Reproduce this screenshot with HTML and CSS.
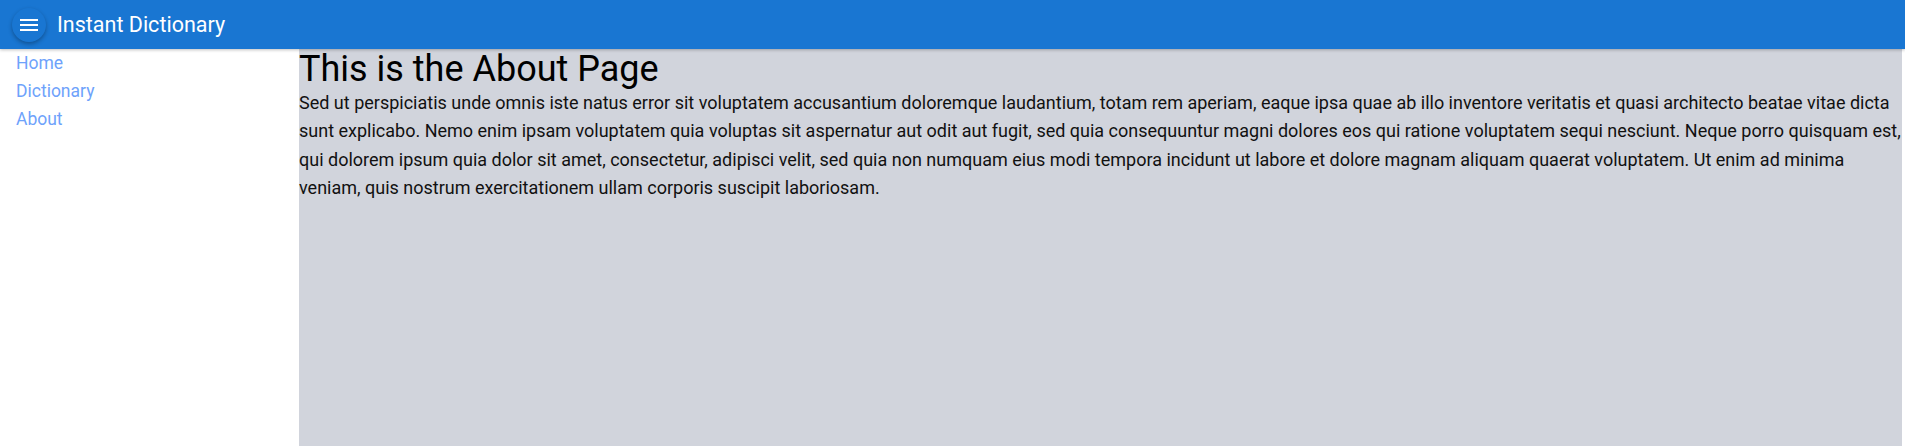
FILE: index.html
```html
<!DOCTYPE html>
<html lang="en">
<head>
<meta charset="utf-8">
<title>Instant Dictionary</title>
<link rel="stylesheet" href="styles.css">
</head>
<body>
<header class="appbar">
  <button class="menu-btn" aria-label="menu">
    <svg viewBox="0 0 24 24" width="24" height="24"><path d="M3 18h18v-2H3v2zm0-5h18v-2H3v2zm0-7v2h18V6H3z" fill="#fff"/></svg>
  </button>
  <span class="app-title">Instant Dictionary</span>
</header>
<div class="layout">
  <nav class="sidebar">
    <a href="#" class="nav-link">Home</a>
    <a href="#" class="nav-link">Dictionary</a>
    <a href="#" class="nav-link">About</a>
  </nav>
  <main class="content">
    <h1 class="page-title">This is the About Page</h1>
    <p class="page-text">Sed ut perspiciatis unde omnis iste natus error sit voluptatem accusantium doloremque laudantium, totam rem aperiam, eaque ipsa quae ab illo inventore veritatis et quasi architecto beatae vitae dicta sunt explicabo. Nemo enim ipsam voluptatem quia voluptas sit aspernatur aut odit aut fugit, sed quia consequuntur magni dolores eos qui ratione voluptatem sequi nesciunt. Neque porro quisquam est, qui dolorem ipsum quia dolor sit amet, consectetur, adipisci velit, sed quia non numquam eius modi tempora incidunt ut labore et dolore magnam aliquam quaerat voluptatem. Ut enim ad minima veniam, quis nostrum exercitationem ullam corporis suscipit laboriosam.</p>
  </main>
</div>
</body>
</html>
```
FILE: styles.css
```css
* { box-sizing: border-box; }
html, body { margin: 0; padding: 0; height: 100%; }
body {
  font-family: Roboto, "Liberation Sans", sans-serif;
  background: #fff;
  display: flex;
  flex-direction: column;
  overflow: hidden;
}
.appbar {
  height: 49px;
  flex: 0 0 49px;
  background: #1976d2;
  display: flex;
  align-items: center;
  padding-left: 12px;
  gap: 11px;
  box-shadow: 0 1px 3px rgba(0,0,0,0.25);
  position: relative;
  z-index: 1;
}
.menu-btn {
  width: 34px;
  height: 34px;
  border-radius: 50%;
  border: none;
  padding: 0;
  background: #1976d2;
  display: flex;
  align-items: center;
  justify-content: center;
  box-shadow: 0 2px 4px rgba(0,0,0,0.3);
}
.app-title {
  color: #fff;
  font-size: 21.5px;
  font-weight: 400;
}
.layout {
  flex: 1;
  display: flex;
  min-height: 0;
}
.sidebar {
  width: 299px;
  flex: 0 0 299px;
  display: flex;
  flex-direction: column;
  padding: 0 0 0 16px;
}
.nav-link {
  color: #6ea2fb;
  text-decoration: none;
  font-size: 17.5px;
  line-height: 28px;
}
.content {
  flex: 1;
  background: #d1d4dc;
  margin-right: 3px;
}
.page-title {
  margin: 0;
  font-size: 36px;
  font-weight: 400;
  line-height: 40px;
  color: #000;
}
.page-text {
  margin: 0;
  font-size: 18px;
  line-height: 28.3px;
  color: #111;
}
```
